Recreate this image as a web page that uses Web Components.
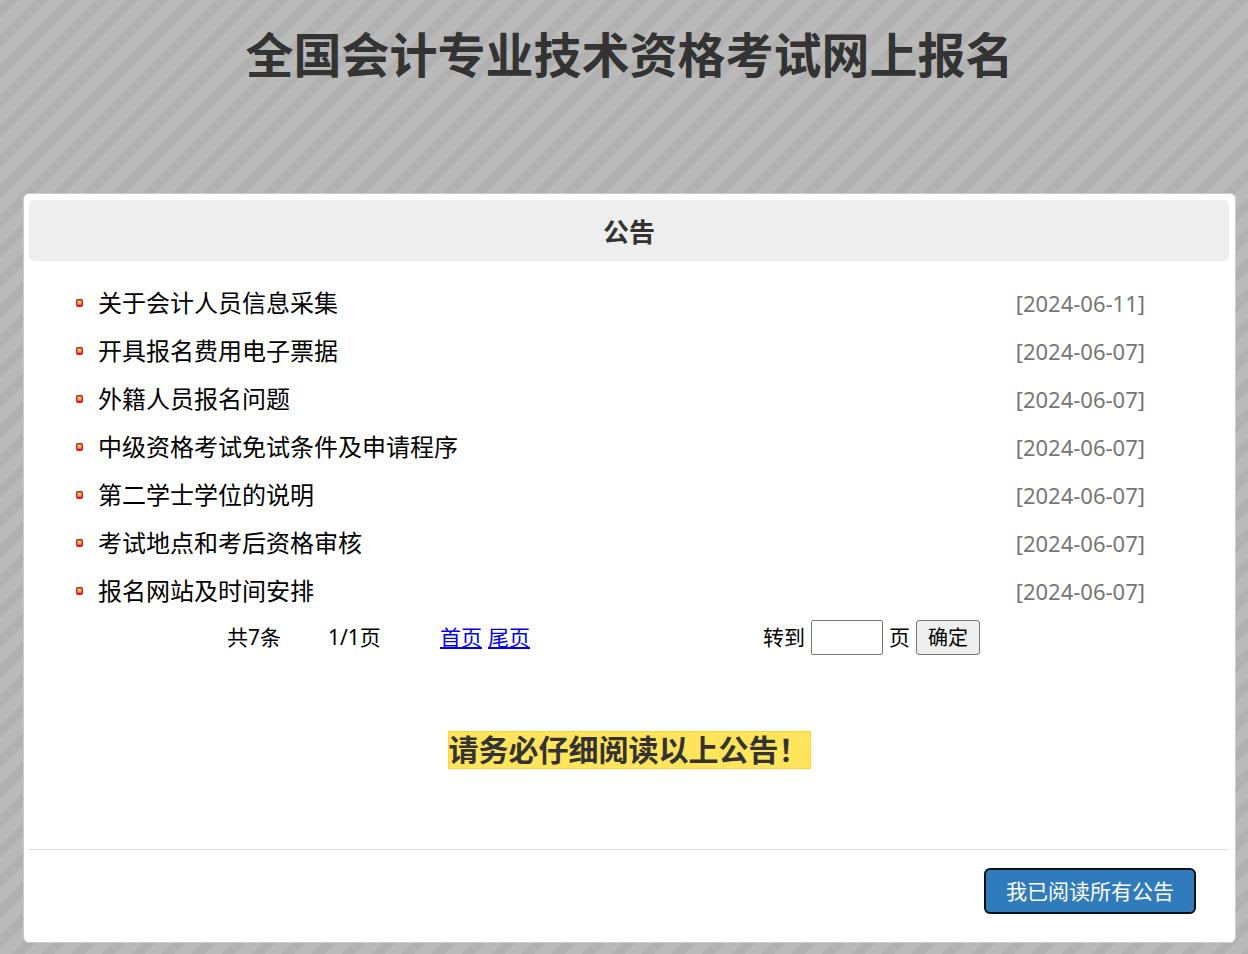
<!DOCTYPE html>
<html lang="zh-CN">
<head>
<meta charset="utf-8">
<title>全国会计专业技术资格考试网上报名</title>
<style>
html { min-height: 100%; }
body {
  margin: 0;
  font-family: "Noto Sans", "Noto Sans CJK SC", sans-serif;
  color: #000;
  background: #bababa linear-gradient(135deg, #b1b1b1 10%, #bababa 12%, #bababa 38%, #b1b1b1 40%, #b1b1b1 60%, #bababa 62%, #bababa 88%, #b1b1b1 90%) 12px 0 / 30px 30px;
}
</style>
</head>
<body>
<signup-page></signup-page>

<template id="page-tpl">
  <style>
    :host { display: block; padding: 0 12px 12px 23px; }
    h1 { margin: 0; padding: 19px 0 102px; font-size: 48px; line-height: 72px; text-align: center; color: #333; }
  </style>
  <h1>全国会计专业技术资格考试网上报名</h1>
  <notice-panel>
    <span slot="title">公告</span>
    <notice-list></notice-list>
    <notice-pager></notice-pager>
    <span slot="warning">请务必仔细阅读以上公告！</span>
    <confirm-button slot="footer">我已阅读所有公告</confirm-button>
  </notice-panel>
</template>

<template id="panel-tpl">
  <style>
    :host { display: block; box-sizing: border-box; padding: 6px 6px 5px 5px; background: #fff; border: 1px solid #ccc; border-radius: 6px; }
    h2 { margin: 0; padding: 16px 0 12px; background: #eee; border-radius: 5px; font-size: 26px; line-height: 33px; text-align: center; color: #333; }
    .body { padding: 18px 0 0; }
    .warn { margin: 0; padding: 72px 0 80px; text-align: center; font-size: 30px; line-height: 36px; font-weight: 700; color: #333; }
    mark { display: inline-block; background: #ffe45c; border: 1px solid #fed22f; padding: 0 1px 0 0; color: inherit; }
    footer { display: flex; justify-content: flex-end; border-top: 1px solid #ddd; padding: 18px 33px 23px; }
  </style>
  <h2><slot name="title"></slot></h2>
  <div class="body"><slot></slot></div>
  <p class="warn"><mark><slot name="warning"></slot></mark></p>
  <footer><slot name="footer"></slot></footer>
</template>

<template id="list-tpl">
  <style>
    :host { display: block; padding: 0 84px 0 47px; }
    ul { margin: 0; padding: 0; list-style: none; }
  </style>
  <ul></ul>
</template>

<template id="item-tpl">
  <style>
    :host { display: flex; align-items: center; height: 48px; font-size: 24px; line-height: 48px; }
    svg { flex: none; width: 7px; height: 8px; margin-right: 15px; }
    a { color: #000; text-decoration: none; flex: 1; }
    time { font-size: 22px; color: #757575; }
  </style>
  <svg viewBox="0 0 7 8" aria-hidden="true">
    <rect width="7" height="8" rx="2" fill="#e0161a"/>
    <rect x="1" width="5" height="1" fill="#a73021"/>
    <rect x="1" y="1" width="5" height="5" rx="1" fill="#f0703a"/>
    <rect x="2" y="2" width="3" height="3" fill="#fdb45a"/>
    <rect x="2" y="2" width="2" height="2" fill="#ffd98a"/>
  </svg>
  <a href="#"><slot></slot></a>
  <time><slot name="date"></slot></time>
</template>

<template id="pager-tpl">
  <style>
    :host { display: grid; grid-template-columns: 101px 112px 323px auto; align-items: center; padding-left: 198px; height: 44px; font-size: 21px; line-height: 35px; }
    .links, form { display: flex; align-items: center; gap: 6px; margin: 0; }
    a { color: #00e; }
    input, button { box-sizing: border-box; height: 35px; border: 1px solid #767676; border-radius: 3px; font: inherit; font-size: 20px; line-height: 33px; color: #000; }
    input { width: 72px; padding: 0 3px; background: #fff; border-radius: 2px; }
    button { width: 64px; padding: 0; background: #efefef; }
  </style>
  <span>共7条</span>
  <span>1/1页</span>
  <nav class="links"><a href="#first">首页</a><a href="#last">尾页</a></nav>
  <form><label for="go">转到</label><input id="go" type="text"><span>页</span><button type="button">确定</button></form>
</template>

<template id="button-tpl">
  <style>
    :host { display: block; }
    button { box-sizing: border-box; height: 46px; padding: 0 20px; border: 2px solid #101010; border-radius: 6px; background: #2f7bbb; color: #fff; font: inherit; font-size: 21px; line-height: 42px; }
  </style>
  <button type="button"><slot></slot></button>
</template>

<script>
const define = (name, id, ready) => customElements.define(name, class extends HTMLElement {
  constructor() {
    super();
    this.attachShadow({ mode: "open" }).append(document.getElementById(id).content.cloneNode(true));
    if (ready) ready(this.shadowRoot);
  }
});
const notices = [
  ["关于会计人员信息采集", "2024-06-11"],
  ["开具报名费用电子票据", "2024-06-07"],
  ["外籍人员报名问题", "2024-06-07"],
  ["中级资格考试免试条件及申请程序", "2024-06-07"],
  ["第二学士学位的说明", "2024-06-07"],
  ["考试地点和考后资格审核", "2024-06-07"],
  ["报名网站及时间安排", "2024-06-07"]
];
define("notice-item", "item-tpl");
define("notice-list", "list-tpl", root => {
  root.querySelector("ul").innerHTML = notices.map(([title, date]) =>
    `<li><notice-item>${title}<span slot="date">[${date}]</span></notice-item></li>`).join("");
});
define("notice-pager", "pager-tpl");
define("confirm-button", "button-tpl");
define("notice-panel", "panel-tpl");
define("signup-page", "page-tpl");
</script>
</body>
</html>
